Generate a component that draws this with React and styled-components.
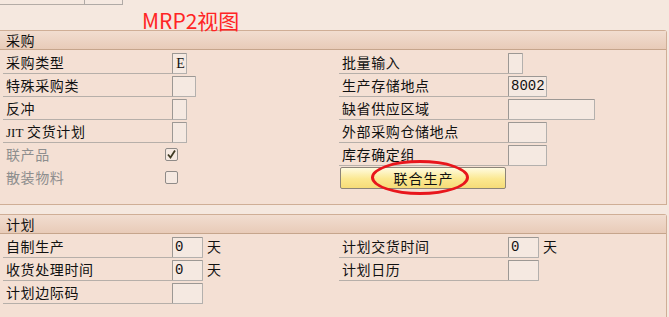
import React from 'react';
import styled, { createGlobalStyle } from 'styled-components';

const Global = createGlobalStyle`
  body {
    margin: 0;
    background: #f5e8df;
    font-family: "Noto Sans CJK SC", "Noto Sans", sans-serif;
  }
`;

const Page = styled.div`
  position: relative;
  width: 669px;
  height: 317px;
  overflow: hidden;
  background: #f5e8df;
  color: #111;
  font-size: 14px;
`;

const TopStub = styled.div`
  display: flex;
  height: 5px;
`;

const StubLine = styled.div`
  width: 84px;
  height: 4px;
  border-bottom: 1px solid #b4aca6;
`;

const StubBox = styled.div`
  width: 37px;
  height: 4px;
  border: 1px solid #b0aaa6;
  border-top: none;
  background: #f5e9e1;
`;

const Note = styled.div`
  position: absolute;
  left: 142px;
  top: 6px;
  font-size: 21px;
  line-height: 28px;
  color: #ff2424;
`;

const Panel = styled.section`
  width: 666px;
  margin-top: ${p => p.$top}px;
  background: #f4e0d4;
  border: 1px solid #cfae96;
  border-left: none;
  border-top-right-radius: 3px;
`;

const Header = styled.div`
  height: 18px;
  line-height: 18px;
  padding-left: 6px;
  background: linear-gradient(#f1ddd0, #e8cbb8);
  border-bottom: 1px solid #c6a58c;
  letter-spacing: 0.5px;
`;

const Body = styled.div`
  display: grid;
  grid-template-columns: 336px 1fr;
  padding: 1px 0 ${p => p.$bottom}px 3px;
`;

const Column = styled.div`
  display: flex;
  flex-direction: column;
`;

const Row = styled.div`
  display: flex;
  align-items: flex-end;
  box-sizing: border-box;
  width: ${p => p.$width}px;
  height: 23px;
  border-bottom: 1px solid ${p => (p.$plain ? 'transparent' : '#b6afa9')};
`;

const Label = styled.div`
  flex-shrink: 0;
  width: ${p => p.$width || 169}px;
  align-self: center;
  padding-left: 3px;
  box-sizing: border-box;
  letter-spacing: 0.6px;
  white-space: nowrap;
  color: ${p => (p.$muted ? '#8e8e8e' : '#111')};
`;

const Latin = styled.span`
  font-family: "Liberation Serif", serif;
  font-size: 13px;
  letter-spacing: 0;
`;

const Field = styled.div`
  flex-shrink: 0;
  box-sizing: border-box;
  width: ${p => p.$width}px;
  height: 21px;
  margin-bottom: -1px;
  padding-left: 2px;
  background: #f5e9e1;
  border: 1px solid #b3b0ad;
  border-top-color: #9c9894;
  border-left-color: #9c9894;
  border-radius: 1px;
  font-family: "Liberation Mono", monospace;
  font-size: 14px;
  line-height: 19px;
  text-align: ${p => (p.$center ? 'center' : 'left')};
`;

const Serif = styled.span`
  font-family: "Liberation Serif", serif;
  font-size: 14px;
`;

const Unit = styled.div`
  flex-shrink: 0;
  align-self: center;
  margin-left: 4px;
`;

const Check = styled.div`
  flex-shrink: 0;
  align-self: center;
  width: 13px;
  height: 13px;
  box-sizing: border-box;
  border: 1px solid #8f8b88;
  border-radius: 2px;
  background: #f5e9e1;
  display: flex;
  align-items: center;
  justify-content: center;
`;

const ButtonWrap = styled.div`
  position: relative;
  margin: 1px 0 0 1px;
  width: 166px;
`;

const Button = styled.div`
  box-sizing: border-box;
  height: 22px;
  line-height: 20px;
  text-align: center;
  border: 1px solid #8c8478;
  border-radius: 2px;
  background: linear-gradient(#fffbe0, #fbe890 55%, #f6dc78);
  letter-spacing: 1px;
  padding-left: 1px;
`;

const Ring = styled.div`
  position: absolute;
  left: 31px;
  top: -7px;
  width: 98px;
  height: 35px;
  box-sizing: border-box;
  border: 3px solid #e8161c;
  border-radius: 50%;
  pointer-events: none;
`;

const Tick = () => (
  <svg width="11" height="11" viewBox="0 0 11 11">
    <path d="M2 5.5 L4.5 8.5 L9 1.5" fill="none" stroke="#3f3a22" strokeWidth="1.8" />
  </svg>
);

const InputRow = ({ label, width, box, value, unit, center, serif }) => (
  <Row $width={width}>
    <Label>{label}</Label>
    <Field $width={box} $center={center}>{serif ? <Serif>{value}</Serif> : value}</Field>
    {unit && <Unit>{unit}</Unit>}
  </Row>
);

const CheckRow = ({ label, checked }) => (
  <Row $width={184} $plain>
    <Label $width={162} $muted>{label}</Label>
    <Check>{checked && <Tick />}</Check>
  </Row>
);

export default function App() {
  return (
    <Page>
      <Global />
      <TopStub>
        <StubLine />
        <StubBox />
      </TopStub>

      <Panel $top={25}>
        <Header>采购</Header>
        <Body $bottom={15}>
          <Column>
            <InputRow label="采购类型" width={184} box={15} value="E" center serif />
            <InputRow label="特殊采购类" width={184} box={24} />
            <InputRow label="反冲" width={184} box={15} />
            <InputRow label={<><Latin>JIT</Latin> 交货计划</>} width={184} box={15} />
            <CheckRow label="联产品" checked />
            <CheckRow label="散装物料" />
          </Column>
          <Column>
            <InputRow label="批量输入" width={169} box={15} />
            <InputRow label="生产存储地点" width={169} box={39} value="8002" />
            <InputRow label="缺省供应区域" width={169} box={87} />
            <InputRow label="外部采购仓储地点" width={169} box={39} />
            <InputRow label="库存确定组" width={169} box={39} />
            <ButtonWrap>
              <Button>联合生产</Button>
              <Ring />
            </ButtonWrap>
          </Column>
        </Body>
      </Panel>

      <Panel $top={9}>
        <Header>计划</Header>
        <Body $bottom={20}>
          <Column>
            <InputRow label="自制生产" width={169} box={31} value="0" unit="天" />
            <InputRow label="收货处理时间" width={169} box={31} value="0" unit="天" />
            <InputRow label="计划边际码" width={169} box={31} />
          </Column>
          <Column>
            <InputRow label="计划交货时间" width={169} box={31} value="0" unit="天" />
            <InputRow label="计划日历" width={169} box={31} />
          </Column>
        </Body>
      </Panel>

      <Note>MRP2视图</Note>
    </Page>
  );
}
